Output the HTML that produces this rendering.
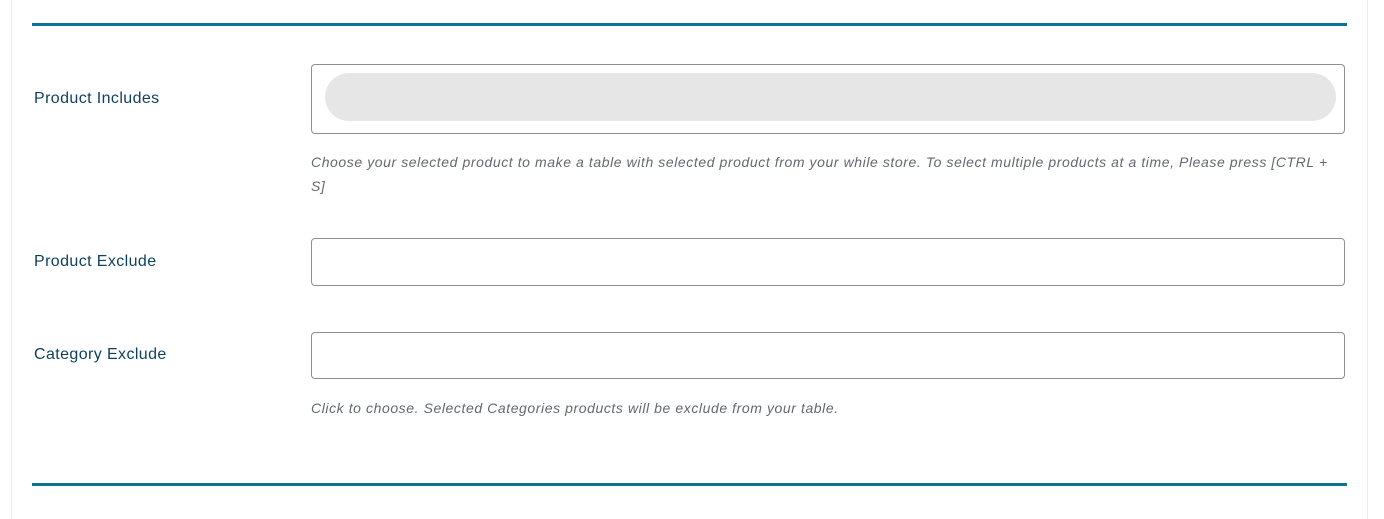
<!DOCTYPE html>
<html><head><style>
body{margin:0;background:#fff;width:1384px;height:508px;position:relative;overflow:hidden;font-family:"Liberation Sans",sans-serif}
.panel{position:absolute;left:11px;top:-1px;width:1355px;height:520px;border-left:1px solid #ececec;border-right:1px solid #ececec;background:#fff}
.line{position:absolute;left:32px;width:1315px;height:3px;background:#0e7394}
.lbl{position:absolute;left:34px;font-size:16px;color:#0d3f5f;letter-spacing:0.4px}
.box{position:absolute;left:311px;width:1032px;border:1px solid #8c8f94;border-radius:4px;background:#fff}
.desc{position:absolute;left:311px;width:1035px;font-size:14px;font-style:italic;color:#646970;line-height:24px;letter-spacing:0.58px}
</style></head><body>
<div class="panel"></div>
<div class="line" style="top:23px"></div>
<div class="lbl" style="top:90px">Product Includes</div>
<div class="box" style="top:64px;height:68px"><div style="position:absolute;left:13px;top:8px;right:8px;height:48px;background:#e6e6e6;border-radius:24px"></div></div>
<div class="desc" style="top:150px">Choose your selected product to make a table with selected product from your while store. To select multiple products at a time, Please press [CTRL + S]</div>
<div class="lbl" style="top:253px">Product Exclude</div>
<div class="box" style="top:238px;height:46px"></div>
<div class="lbl" style="top:346px">Category Exclude</div>
<div class="box" style="top:332px;height:45px"></div>
<div class="desc" style="top:396px">Click to choose. Selected Categories products will be exclude from your table.</div>
<div class="line" style="top:483px"></div>
</body></html>
